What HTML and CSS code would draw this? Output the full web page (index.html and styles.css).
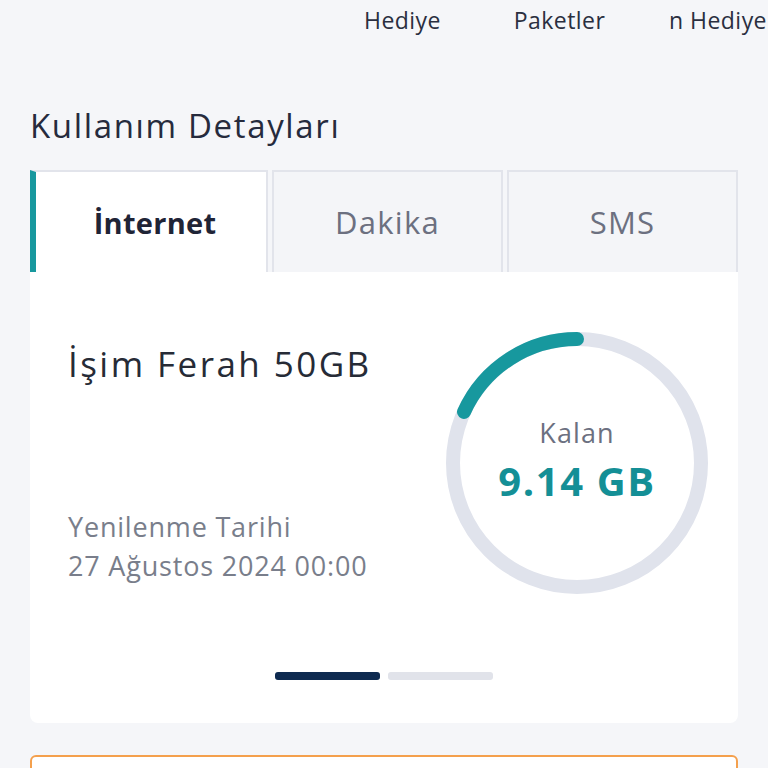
FILE: index.html
```html
<!DOCTYPE html>
<html lang="tr">

<head>
    <meta charset="UTF-8">
    <meta name="viewport" content="width=device-width, initial-scale=1.0">
    <title>Kullanım Detayları</title>
    <link rel="stylesheet" href="styles.css">
</head>

<body>
    <div class="shortcuts">
        <div class="shortcut">Hediye</div>
        <div class="shortcut">Paketler</div>
        <div class="shortcut clipped">Kazan Hediye</div>
    </div>

    <h2 class="section-title">Kullanım Detayları</h2>

    <div class="tabs">
        <div class="tab active">İnternet</div>
        <div class="tab">Dakika</div>
        <div class="tab">SMS</div>
    </div>

    <div class="usage-card">
        <div class="usage-row">
            <div class="usage-info">
                <div class="package-name">İşim Ferah 50GB</div>
                <div class="renew">
                    <div>Yenilenme Tarihi</div>
                    <div>27 Ağustos 2024 00:00</div>
                </div>
            </div>
            <div class="ring">
                <svg width="262" height="262" viewBox="0 0 262 262">
                    <circle cx="131" cy="131" r="124" fill="none" stroke="#e0e3ec" stroke-width="14" />
                    <circle cx="131" cy="131" r="124" fill="none" stroke="#17989e" stroke-width="14"
                        stroke-linecap="round" stroke-dasharray="142 1000"
                        transform="rotate(-90 131 131) scale(1 -1) translate(0 -262)" />
                </svg>
                <div class="ring-text">
                    <div class="ring-label">Kalan</div>
                    <div class="ring-value">9.14 GB</div>
                </div>
            </div>
        </div>
        <div class="pager">
            <span class="dot current"></span>
            <span class="dot"></span>
        </div>
    </div>

    <div class="next-card"></div>
</body>

</html>
```

FILE: styles.css
```css
* {
    margin: 0;
    padding: 0;
    box-sizing: border-box;
}

body {
    background-color: #f5f6f9;
    font-family: 'Open Sans', 'Noto Sans', sans-serif;
    color: #262b3d;
    width: 768px;
    height: 768px;
    overflow: hidden;
}

/* top shortcut labels, scrolled partly out of view */
.shortcuts {
    display: flex;
    padding-left: 324px;
    height: 40px;
    overflow: hidden;
    white-space: nowrap;
}

.shortcut {
    flex: 0 0 157px;
    text-align: center;
    font-size: 23px;
    letter-spacing: 0.02em;
    line-height: 40px;
    color: #2a2f40;
}

.shortcut.clipped {
    flex: 0 0 99px;
    margin-left: 30px;
    overflow: hidden;
    display: flex;
    justify-content: flex-end;
}

.section-title {
    font-size: 33px;
    font-weight: 400;
    letter-spacing: 0.05em;
    color: #262b3d;
    margin: 63px 0 0 30px;
    line-height: 46px;
}

.tabs {
    display: flex;
    gap: 4px;
    margin: 21px 30px 0;
}

.tab {
    height: 102px;
    display: flex;
    align-items: center;
    justify-content: center;
    font-size: 31px;
    letter-spacing: 0.04em;
    color: #6c7080;
    background: #f4f5f8;
    border: 2px solid #e2e4eb;
    border-bottom: none;
}

.tab:nth-child(1) {
    width: 238px;
}

.tab:nth-child(2) {
    width: 231px;
}

.tab:nth-child(3) {
    flex: 1;
}

.tab.active {
    background: #ffffff;
    color: #1f2436;
    font-size: 29px;
    font-weight: 700;
    letter-spacing: 0.01em;
    border-left: 6px solid #17989e;
    padding-left: 8px;
}

.usage-card {
    background: #ffffff;
    margin: 0 30px;
    height: 451px;
    border-radius: 0 0 8px 8px;
    padding: 60px 30px 0 38px;
}

.usage-row {
    display: flex;
    justify-content: space-between;
}

.usage-info {
    display: flex;
    flex-direction: column;
    justify-content: space-between;
    padding-top: 8px;
    height: 253px;
}

.package-name {
    font-size: 35px;
    font-weight: 500;
    letter-spacing: 0.07em;
    color: #262b36;
}

.renew {
    font-size: 27px;
    letter-spacing: 0.03em;
    line-height: 39px;
    color: #797e8b;
}

.ring {
    position: relative;
    width: 262px;
    height: 262px;
}

.ring svg {
    display: block;
}

.ring-text {
    position: absolute;
    top: 0;
    left: 0;
    right: 0;
    bottom: 0;
    display: flex;
    flex-direction: column;
    align-items: center;
    justify-content: center;
    padding-bottom: 4px;
}

.ring-label {
    font-size: 27px;
    letter-spacing: 0.04em;
    color: #6c7080;
    line-height: 40px;
}

.ring-value {
    font-size: 40px;
    font-weight: 700;
    letter-spacing: 0.04em;
    color: #148f96;
    line-height: 56px;
}

.pager {
    display: flex;
    justify-content: center;
    gap: 8px;
    margin-top: 78px;
    padding-right: 8px;
}

.dot {
    width: 105px;
    height: 8px;
    border-radius: 3px;
    background: #e1e3ea;
}

.dot.current {
    background: #0e2a50;
}

.next-card {
    margin: 32px 30px 0;
    height: 80px;
    border: 2px solid #f4a04d;
    border-radius: 6px;
    background: #ffffff;
}
```
